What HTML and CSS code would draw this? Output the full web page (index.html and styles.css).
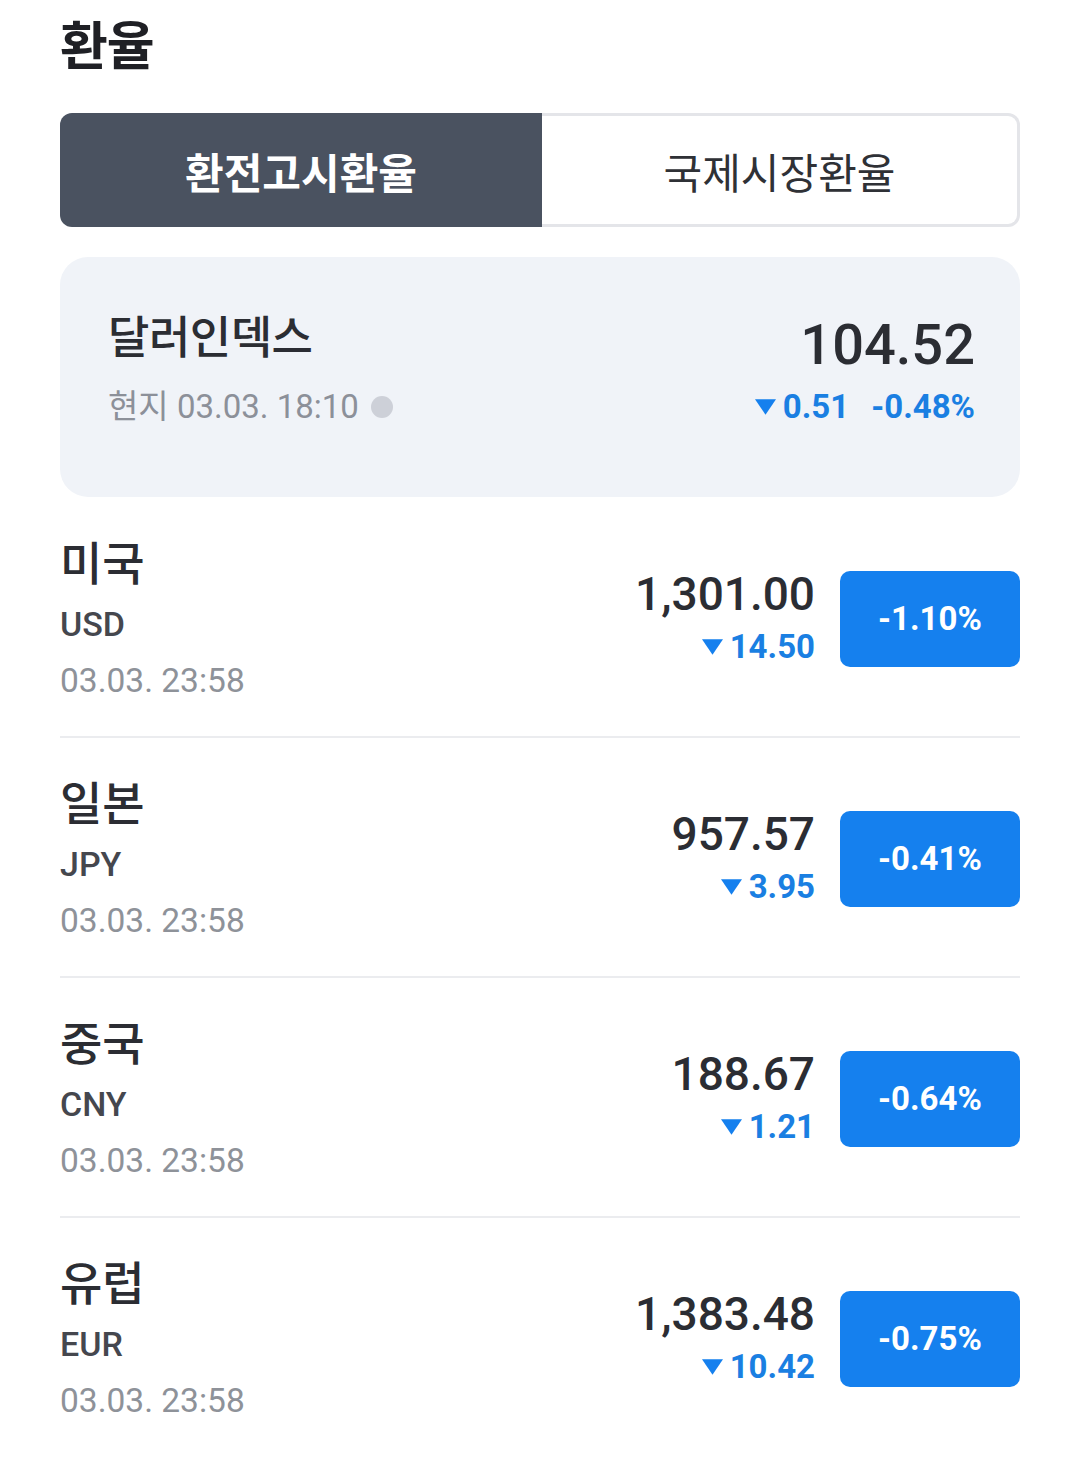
FILE: index.html
```html
<!DOCTYPE html>
<html lang="ko">
<head>
<meta charset="utf-8">
<title>환율</title>
<link rel="stylesheet" href="styles.css">
</head>
<body>
<main class="page">
  <h1 class="title">환율</h1>

  <div class="tabs">
    <div class="tab tab-active">환전고시환율</div>
    <div class="tab">국제시장환율</div>
  </div>

  <section class="index-card">
    <div class="index-left">
      <div class="index-name">달러인덱스</div>
      <div class="index-time">현지 03.03. 18:10 <span class="dot"></span></div>
    </div>
    <div class="index-right">
      <div class="index-value">104.52</div>
      <div class="index-change">
        <span class="chg"><svg class="tri" viewBox="0 0 22 16"><polygon points="0,0 22,0 11,16"/></svg>0.51</span>
        <span class="pct">-0.48%</span>
      </div>
    </div>
  </section>

  <ul class="list">
    <li class="row">
      <div class="row-left">
        <div class="name">미국</div>
        <div class="code">USD</div>
        <div class="time">03.03. 23:58</div>
      </div>
      <div class="row-right">
        <div class="prices">
          <div class="price">1,301.00</div>
          <div class="diff"><svg class="tri" viewBox="0 0 22 16"><polygon points="0,0 22,0 11,16"/></svg>14.50</div>
        </div>
        <div class="badge">-1.10%</div>
      </div>
    </li>
    <li class="row">
      <div class="row-left">
        <div class="name">일본</div>
        <div class="code">JPY</div>
        <div class="time">03.03. 23:58</div>
      </div>
      <div class="row-right">
        <div class="prices">
          <div class="price">957.57</div>
          <div class="diff"><svg class="tri" viewBox="0 0 22 16"><polygon points="0,0 22,0 11,16"/></svg>3.95</div>
        </div>
        <div class="badge">-0.41%</div>
      </div>
    </li>
    <li class="row">
      <div class="row-left">
        <div class="name">중국</div>
        <div class="code">CNY</div>
        <div class="time">03.03. 23:58</div>
      </div>
      <div class="row-right">
        <div class="prices">
          <div class="price">188.67</div>
          <div class="diff"><svg class="tri" viewBox="0 0 22 16"><polygon points="0,0 22,0 11,16"/></svg>1.21</div>
        </div>
        <div class="badge">-0.64%</div>
      </div>
    </li>
    <li class="row">
      <div class="row-left">
        <div class="name">유럽</div>
        <div class="code">EUR</div>
        <div class="time">03.03. 23:58</div>
      </div>
      <div class="row-right">
        <div class="prices">
          <div class="price">1,383.48</div>
          <div class="diff"><svg class="tri" viewBox="0 0 22 16"><polygon points="0,0 22,0 11,16"/></svg>10.42</div>
        </div>
        <div class="badge">-0.75%</div>
      </div>
    </li>
  </ul>
</main>
</body>
</html>
```

FILE: styles.css
```css
* { box-sizing: border-box; }
html, body {
  margin: 0;
  padding: 0;
  background: #ffffff;
}
body {
  font-family: Roboto, "Noto Sans CJK KR", sans-serif;
  color: #2b2d33;
}
.page {
  padding: 16px 60px 0 60px;
}
.title {
  margin: 0;
  font-size: 52px;
  line-height: 64px;
  font-weight: 700;
  color: #1f2025;
  letter-spacing: -1px;
}

.tabs {
  margin-top: 33px;
  display: grid;
  grid-template-columns: 482px 1fr;
  height: 114px;
}
.tab {
  display: flex;
  align-items: center;
  justify-content: center;
  font-size: 42px;
  color: #2f3136;
  border: 3px solid #e4e5e9;
  border-left: none;
  border-radius: 0 12px 12px 0;
  background: #ffffff;
}
.tab-active {
  background: #4a5260;
  color: #ffffff;
  font-weight: 700;
  border: none;
  border-radius: 12px 0 0 12px;
}

.index-card {
  margin-top: 30px;
  background: #f0f3f8;
  border-radius: 28px;
  padding: 52px 45px 60px 48px;
  display: flex;
  justify-content: space-between;
  align-items: flex-start;
}
.index-name {
  font-size: 45px;
  line-height: 60px;
  font-weight: 500;
  color: #2b2d33;
  letter-spacing: -0.5px;
}
.index-time {
  margin-top: 8px;
  font-size: 33px;
  line-height: 60px;
  color: #8c9099;
  display: flex;
  align-items: center;
  gap: 12px;
}
.dot {
  display: inline-block;
  width: 22px;
  height: 22px;
  border-radius: 50%;
  background: #cdd0d8;
}
.index-right {
  margin-top: 4px;
  text-align: right;
}
.index-value {
  font-size: 56px;
  line-height: 64px;
  font-weight: 500;
  color: #2b2d33;
}
.index-change {
  font-size: 33px;
  line-height: 60px;
  font-weight: 700;
  color: #1a7fe2;
  display: flex;
  justify-content: flex-end;
  align-items: center;
  gap: 22px;
}
.chg {
  display: inline-flex;
  align-items: center;
}
.tri {
  width: 21px;
  height: 16px;
  margin-right: 7px;
  fill: #1580ee;
}

.list {
  list-style: none;
  margin: 1px 0 0 0;
  padding: 0;
}
.row {
  display: flex;
  justify-content: space-between;
  align-items: center;
  padding: 28px 0 25px 0;
  border-bottom: 2px solid #ebecef;
}
.row:last-child {
  border-bottom: none;
}
.name {
  margin-top: 5px;
  font-size: 46px;
  line-height: 66px;
  font-weight: 500;
  color: #2b2d33;
}
.code {
  font-size: 34px;
  line-height: 54px;
  font-weight: 500;
  color: #45474e;
}
.time {
  font-size: 33.5px;
  line-height: 60px;
  color: #8e9299;
}
.row-right {
  display: flex;
  align-items: center;
  gap: 25px;
}
.prices {
  text-align: right;
}
.price {
  font-size: 46px;
  line-height: 56px;
  font-weight: 500;
  color: #2b2d33;
}
.diff {
  font-size: 33px;
  line-height: 50px;
  font-weight: 700;
  color: #1a7fe2;
  display: flex;
  justify-content: flex-end;
  align-items: center;
}
.badge {
  width: 180px;
  height: 96px;
  border-radius: 10px;
  background: #1580ee;
  color: #ffffff;
  font-size: 33px;
  font-weight: 700;
  display: flex;
  align-items: center;
  justify-content: center;
}
```
